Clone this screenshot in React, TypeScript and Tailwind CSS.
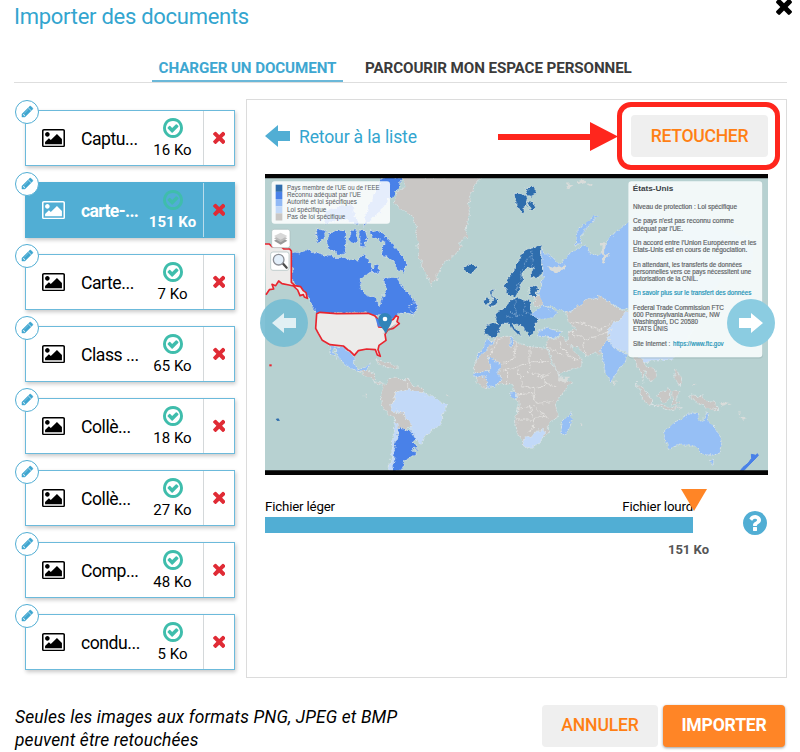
import React from "react";

const TIMES =
  "M1490 1322q0 40-28 68l-136 136q-28 28-68 28t-68-28l-294-294-294 294q-28 28-68 28t-68-28l-136-136q-28-28-28-68t28-68l294-294-294-294q-28-28-28-68t28-68l136-136q28-28 68-28t68 28l294 294 294-294q28-28 68-28t68 28l136 136q28 28 28 68t-28 68l-294 294 294 294q28 28 28 68z";
const CHECK =
  "M1299 813l-422 422q-19 19-45 19t-45-19l-294-294q-19-19-19-45t19-45l102-102q19-19 45-19t45 19l147 147 275-275q19-19 45-19t45 19l102 102q19 19 19 45t-19 45zm141 83q0-148-73-273t-198-198-273-73-273 73-198 198-73 273 73 273 198 198 273 73 273-73 198-198 73-273zm224 0q0 209-103 385.5t-279.5 279.5-385.5 103-385.5-103-279.5-279.5-103-385.5 103-385.5 279.5-279.5 385.5-103 385.5 103 279.5 279.5 103 385.5z";
const PICTURE =
  "M576 576q0 80-56 136t-136 56-136-56-56-136 56-136 136-56 136 56 56 136zm1024 384v448h-1408v-192l320-320 160 160 512-512zm96-704h-1600q-13 0-22.5 9.5t-9.5 22.5v1216q0 13 9.5 22.5t22.5 9.5h1600q13 0 22.5-9.5t9.5-22.5v-1216q0-13-9.5-22.5t-22.5-9.5zm160 32v1216q0 66-47 113t-113 47h-1600q-66 0-113-47t-47-113v-1216q0-66 47-113t113-47h1600q66 0 113 47t47 113z";
const PENCIL =
  "M491 1536l91-91-235-235-91 91v107h128v128h107zm523-928q0-22-22-22-10 0-17 7l-542 542q-7 7-7 17 0 22 22 22 10 0 17-7l542-542q7-7 7-17zm-54-192l416 416-832 832h-416v-416zm683 96q0 53-37 90l-166 166-416-416 166-165q36-38 90-38 53 0 91 38l235 234q37 39 37 91z";
const QUESTION =
  "M1024 1376v-192q0-14-9-23t-23-9h-192q-14 0-23 9t-9 23v192q0 14 9 23t23 9h192q14 0 23-9t9-23zm256-672q0-88-55.5-163t-138.5-116-170-41q-243 0-371 213-15 24 8 42l132 100q7 6 19 6 16 0 25-12 53-68 86-92 34-24 86-24 48 0 85.5 26t37.5 59q0 38-20 61t-68 45q-63 28-115.5 86.5t-52.5 125.5v36q0 14 9 23t23 9h192q14 0 23-9t9-23q0-19 21.5-49.5t54.5-49.5q32-18 49-28.5t46-35 44.5-48 28-60.5 12.5-81zm384 192q0 209-103 385.5t-279.5 279.5-385.5 103-385.5-103-279.5-279.5-103-385.5 103-385.5 279.5-279.5 385.5-103 385.5 103 279.5 279.5 103 385.5z";

function Icon({ d, box, className }: { d: string; box: string; className: string }) {
  return (
    <svg viewBox={box} className={className} fill="currentColor" aria-hidden="true">
      <path d={d} />
    </svg>
  );
}

const files = [
  { name: "Captu...", size: "16 Ko" },
  { name: "carte-...", size: "151 Ko", active: true },
  { name: "Carte...", size: "7 Ko" },
  { name: "Class ...", size: "65 Ko" },
  { name: "Collè...", size: "18 Ko" },
  { name: "Collè...", size: "27 Ko" },
  { name: "Comp...", size: "48 Ko" },
  { name: "condu...", size: "5 Ko" },
];

function FileCard({ name, size, active }: { name: string; size: string; active?: boolean }) {
  return (
    <li
      className={
        "relative flex h-14 w-[210px] border shadow-[1px_2px_4px_rgba(0,0,0,0.22)] " +
        (active ? "border-[#51aed4] bg-[#51aed4] font-bold text-white" : "border-[#6cbadb] bg-white text-black")
      }
    >
      <span className="absolute -left-[11px] -top-[11px] flex size-6 items-center justify-center rounded-full border border-[#51aed4] bg-white text-[#3fa6d0]">
        <Icon d={PENCIL} box="0 0 1792 1792" className="size-[13px] [&_path]:stroke-current [&_path]:[stroke-width:50]" />
      </span>
      <Icon d={PICTURE} box="-64 128 1920 1536" className="ml-4 mt-[18px] h-[18.4px] w-[23px]" />
      <span className="ml-4 w-[61px] whitespace-nowrap pt-[16px] text-[17.6px] leading-6">
        <span className={active ? "font-bold tracking-[-0.65px]" : "tracking-[-0.45px]"}>{name}</span>
      </span>
      <span className="flex w-[61px] flex-col items-center text-[15px] leading-[18px]">
        <Icon d={CHECK} box="128 128 1536 1536" className="mt-[7px] size-5 text-[#3fbdac]" />
        <span className="mt-[3px] whitespace-nowrap">{size}</span>
      </span>
      <span className={"flex flex-1 items-center justify-center border-l text-[#e02b35] " + (active ? "border-[#b9dceb]" : "border-[#d4d8da]")}>
        <Icon d={TIMES} box="302 302 1188 1252" className="mb-px h-[13px] w-[12.5px]" />
      </span>
    </li>
  );
}

const GRAY = "#c9c7c5";
const DARK = "#2f6dad";
const BLUE = "#4981e8";
const LIGHT = "#96bff5";
const PALE = "#c2d9f8";

const lands: [string, string][] = [
  [GRAY, "455,20 470,48 445,62 427,98 455,118 488,140 498,180 507,250 520,295 545,347 560,320 575,285 602,265 635,235 628,220 648,200 658,130 655,90 665,65 690,20"],
  [BLUE, "125,243 150,250 180,240 210,255 235,252 250,265 290,265 325,270 345,248 360,280 370,305 335,325 328,350 345,375 375,385 390,410 402,375 405,350 400,325 440,322 460,355 480,375 500,400 495,435 470,430 450,430 430,450 400,440 375,435 340,428 200,428 185,400 165,365 125,335"],
  [BLUE, "360,178 400,188 415,210 440,235 470,278 460,305 440,295 425,270 400,262 395,240 405,215 370,205"],
  [BLUE, "240,188 280,182 292,210 288,245 265,250 235,235 230,215"],
  [BLUE, "200,175 230,182 222,210 200,217"],
  [BLUE, "298,182 320,180 320,215 302,215"],
  [BLUE, "330,180 350,182 345,230 330,230"],
  [BLUE, "365,290 390,285 390,308 368,310"],
  [BLUE, "390,24 455,20 445,55 420,85 395,120 340,170 350,120 370,80"],
  [BLUE, "230,120 300,100 330,165 270,150 225,160"],
  [BLUE, "480,405 497,398 500,430 480,428"],
  [LIGHT, "235,525 280,531 300,543 313,558 310,580 325,597 343,590 360,580 350,600 330,605 290,590 265,560 258,535 250,535 262,570 245,550"],
  [GRAY, "330,605 350,598 375,610 372,635 400,640 385,645 360,625"],
  [GRAY, "375,572 420,578 445,595 425,595 395,585"],
  [GRAY, "388,690 400,645 430,622 470,630 520,655 520,680 480,720 490,765 465,778 440,775 435,745 405,725"],
  [PALE, "422,705 440,670 480,657 520,673 545,680 590,705 570,760 550,780 530,792 515,825 495,805 475,790 487,765 460,735 425,720"],
  [PALE, "433,745 445,775 440,840 430,904 415,904 425,860"],
  [BLUE, "447,775 475,778 498,803 487,822 507,830 500,840 490,835 493,855 465,870 455,900 430,904 433,840"],
  [DARK, "640,287 665,282 682,292 662,313 645,303"],
  [DARK, "792,70 820,70 832,80 830,105 815,132 800,110"],
  [DARK, "828,60 850,52 860,65 845,80 832,75"],
  [DARK, "835,98 845,92 850,118 838,120"],
  [DARK, "765,345 790,300 825,240 872,228 880,290 865,325 842,322 852,290 835,292 820,310 812,350 790,382 770,368"],
  [DARK, "722,360 732,357 728,375 742,395 738,408 720,408 725,385"],
  [DARK, "703,388 715,385 716,402 703,407"],
  [DARK, "735,432 757,420 775,395 795,388 842,388 846,430 862,435 857,475 838,502 832,485 810,465 790,460 800,480 815,498 798,495 778,462 755,463 735,500 707,498 706,463 745,462"],
  [DARK, "840,350 860,345 863,378 840,380"],
  [GRAY, "850,380 880,378 882,405 855,407"],
  [LIGHT, "875,240 900,260 930,283 952,255 1000,225 1030,258 1055,245 1080,200 1125,165 1160,130 1230,135 1350,145 1490,200 1550,245 1545,260 1450,300 1380,370 1270,430 1200,410 1125,420 1050,383 960,430 880,405 863,370 880,325"],
  [LIGHT, "845,435 875,405 920,425 910,443 865,450"],
  [LIGHT, "975,225 982,180 1040,135 1044,140 1000,180 990,225"],
  [GRAY, "950,430 980,410 1010,390 1050,380 1120,422 1140,430 1100,450 1080,480 1090,520 1060,550 1010,555 950,520 955,485 980,480 955,455"],
  [PALE, "1075,475 1125,430 1200,450 1280,440 1330,480 1300,535 1260,570 1180,575 1130,550 1080,525"],
  [LIGHT, "865,480 895,475 935,485 930,499 900,503 863,498"],
  [GRAY, "890,505 940,503 955,520 980,550 1000,570 985,590 925,615 910,580 893,535"],
  [GRAY, "670,600 680,560 720,510 755,500 785,498 800,515 840,530 890,535 905,580 930,620 965,635 945,665 915,700 925,740 895,760 895,785 870,815 830,835 820,830 800,780 795,740 805,700 798,675 780,640 745,645 700,650 680,640"],
  [LIGHT, "675,575 680,560 715,512 735,510 705,545"],
  [LIGHT, "715,560 755,585 745,605 755,630 735,653 708,650 705,620 672,620 673,605 720,605"],
  [LIGHT, "782,500 790,500 790,532 780,525"],
  [LIGHT, "782,665 800,667 800,688 782,683"],
  [PALE, "817,805 848,800 862,780 880,778 880,803 860,828 825,835"],
  [LIGHT, "930,785 934,755 960,728 966,750 948,796"],
  [LIGHT, "1050,545 1075,510 1095,535 1133,555 1125,578 1105,600 1095,615 1086,637 1072,620 1060,570"],
  [GRAY, "1150,560 1172,560 1192,590 1218,600 1220,622 1200,635 1182,600 1178,640 1163,590"],
  [GRAY, "1158,640 1182,655 1208,693 1203,706 1178,688"],
  [GRAY, "1220,680 1257,650 1262,680 1240,699"],
  [GRAY, "1205,703 1250,708 1300,713 1255,720"],
  [GRAY, "1266,668 1287,663 1277,690 1287,702 1268,702"],
  [GRAY, "1318,678 1355,680 1392,698 1408,722 1370,714 1338,697"],
  [GRAY, "1270,595 1280,600 1295,630 1290,645 1275,620"],
  [LIGHT, "1240,785 1280,752 1320,730 1345,735 1350,750 1360,750 1368,728 1380,760 1415,805 1405,845 1380,857 1355,845 1335,825 1290,825 1255,838"],
  [LIGHT, "1378,871 1395,871 1387,889"],
];

const borders =
  "M755 502L725 540L715 560M800 520L795 560L755 585M840 530V575L805 590L760 600M890 575H840L835 605L875 620L905 610M805 590L815 650L850 655L890 640L920 650M800 675L845 670L860 700L910 695M800 750H850L870 735L895 745M800 715L840 710L850 750V775M850 655L855 690M835 605L815 625M930 520L950 555L985 570M955 485L1000 505L1040 500M1040 500L1085 480M1000 505L1005 555M960 455L1000 460L1050 480L1090 455M440 665L425 700M470 640V657M442 720L460 735M895 535L915 540L940 560M770 600V640M875 620L890 640M850 775L830 790M850 710L890 740";

const notes: [number, string, number, boolean][] = [
  [118, "Niveau de protection : Loi spécifique", 312, false],
  [160, "Ce pays n'est pas reconnu comme", 303, false],
  [182, "adéquat par l'UE.", 150, false],
  [224, "Un accord entre l'Union Européenne et les", 370, false],
  [246, "Etats-Unis est en cours de négociation.", 343, false],
  [290, "En attendant, les transferts de données", 327, false],
  [312, "personnelles vers ce pays nécessitent une", 355, false],
  [333, "autorisation de la CNIL.", 195, false],
  [376, "En savoir plus sur le transfert des données", 355, true],
  [419, "Federal Trade Commission FTC", 273, false],
  [441, "600 Pennsylvania Avenue, NW", 260, false],
  [462, "Washington, DC 20580", 195, false],
  [483, "ETATS UNIS", 104, false],
  [527, "Site Internet :", 112, false],
];

const legend: [number, string, string, number][] = [
  [60, DARK, "Pays membre de l'UE ou de l'EEE", 278],
  [81, BLUE, "Reconnu adéquat par l'UE", 222],
  [103, "#91b9f5", "Autorité et loi spécifiques", 210],
  [125, PALE, "Loi spécifique", 118],
  [147, GRAY, "Pas de loi spécifique", 175],
];

function WorldMap() {
  return (
    <svg viewBox="45 12 1509 903" className="block h-[301px] w-[503px] font-['Liberation_Sans',sans-serif]" preserveAspectRatio="none">
      <defs>
        <filter id="coast" x="0" y="0" width="100%" height="100%" filterUnits="userSpaceOnUse">
          <feTurbulence type="fractalNoise" baseFrequency="0.05" numOctaves="3" seed="4" />
          <feDisplacementMap in="SourceGraphic" scale="20" xChannelSelector="R" yChannelSelector="G" />
        </filter>
      </defs>
      <rect x="45" y="12" width="1509" height="903" fill="#b7d1d1" />
      <g filter="url(#coast)">
        {lands.map(([color, points], i) => (
          <polygon key={i} points={points} fill={color} stroke="#dce6e8" strokeWidth="2.5" strokeDasharray="6 3" />
        ))}
        <path d={borders} fill="none" stroke="#e9e8e6" strokeWidth="2.5" strokeDasharray="7 2" />
        <path d="M780 420L800 440L825 435M795 392L800 440M765 445L785 440M825 390L820 425L846 430M800 360L820 290L845 250M845 290L842 240" fill="none" stroke="#8fb4d8" strokeWidth="2" strokeDasharray="6 3" />
        <g fill="#d9dcda">
          <path d="M945 48l12-8 10 6-12 7zM980 35l20-6 8 8-18 8zM1008 45l18-3-4 10zM1055 215l12 4-2 30 15 8-8 6-8 18-8-2 6-22-8-10zM895 285l25 10 25-12 8 6-30 20-22-5zM925 620l35 0-12 18-24-8zM1090 635l8 3-5 10zM1410 695l35 8-30 8zM1465 720l8 10-6 3zM1470 732l15 13-10 5zM1520 748l12-5-4 8z" />
          <circle cx="595" cy="678" r="3" /><circle cx="344" cy="677" r="3" /><circle cx="994" cy="765" r="3" /><circle cx="1333" cy="642" r="3" />
        </g>
      </g>
      <path d="M1504 853l14 3 4-5 3 5-10 11-12 12-22 23h-10l8-10 16-13 10-14z" fill={BLUE} stroke={BLUE} strokeWidth="3" />
      <g fill="#ecebea" stroke="#e8252f" strokeWidth="5" strokeLinejoin="round">
        <path d="M45 222L58 222L66 230L95 231L102 237L119 237L124 243V337L135 347L152 350L160 362L168 368L172 385L163 381L160 374L150 377L143 360L130 348L117 345L96 341L86 333L77 347L66 343L71 357L58 359L48 374" />
        <path d="M200 431L210 427L260 431L355 430L374 437L383 447L386 471L403 472L414 456L430 448L438 437L445 441L441 455L448 461L430 475L414 479L405 493L408 511L387 526L384 539L391 559L382 555L376 539L350 537L325 542L313 556L301 544L294 540L280 528L240 524L217 511L205 490L197 475Z" />
      </g>
      <path d="M376 443L390 450 400 468 384 470z" fill={BLUE} />
      <path d="M58 583h7v6h-7z" fill="#e8252f" />
      <path d="M77 747l8-2 5 7-8 1z" fill={DARK} />
      <path d="M397 492L425 470L442 458L421 480z" fill="#8b8583" opacity=".6" />
      <path d="M405 429C393 429 385 438 385 449C385 463 399 476 408 491C413 474 426 463 426 449C426 438 417 429 405 429Z" fill="#3184b9" />
      <circle cx="405" cy="447" r="7" fill="#fff" />

      <rect x="65" y="34" width="355" height="127" rx="9" fill="#fff" fillOpacity=".86" />
      {legend.map(([y, color, label, width], i) => (
        <g key={i}>
          <rect x="77" y={44 + i * 21.5} width="20" height="21.5" fill={color} />
          <text x="111" y={y} fontSize="19" textLength={width} lengthAdjust="spacingAndGlyphs" fill="#555a5e">{label}</text>
        </g>
      ))}
      <rect x="65" y="178" width="55" height="55" rx="7" fill="#fff" stroke="#a9bcbc" strokeWidth="2" />
      <path d="M72 212l20-11 20 11-20 12z" fill="#999" /><path d="M72 205l20-11 20 11-20 12z" fill="#bbb" /><path d="M72 198l20-10 20 10-20 11z" fill="#d7d7d7" />
      <rect x="62" y="246" width="55" height="55" rx="7" fill="#fff" stroke="#a9bcbc" strokeWidth="2" />
      <path d="M98 280l12 13" stroke="#4c4c4c" strokeWidth="7" strokeLinecap="round" />
      <circle cx="86" cy="269" r="16" fill="#e3effa" stroke="#8c8f96" strokeWidth="4" />

      <rect x="1135" y="36" width="404" height="530" rx="10" fill="#8ea7a7" opacity=".3" />
      <rect x="1135" y="34" width="402" height="528" rx="10" fill="#f6fbfb" fillOpacity=".95" />
      <text x="1148" y="64" fontSize="24" fontWeight="700" textLength="122" lengthAdjust="spacingAndGlyphs" fill="#3c4246">États-Unis</text>
      {notes.map(([y, text, width, link]) => (
        <text key={y} x="1149" y={y} fontSize="19" textLength={width} lengthAdjust="spacingAndGlyphs" fill={link ? "#1791b5" : "#5d6265"} stroke={link ? "#1791b5" : "#5d6265"} strokeWidth=".5">{text}</text>
      ))}
      <text x="1269" y="527" fontSize="19" textLength="152" lengthAdjust="spacingAndGlyphs" fill="#1791b5" stroke="#1791b5" strokeWidth=".5">https://www.ftc.gov</text>
      <path d="M45 12H1554V25H45zM45 901H1554V915H45z" fill="#050505" />
    </svg>
  );
}

function NavButton({ flip }: { flip?: boolean }) {
  return (
    <button
      className={
        "absolute top-[125px] flex size-12 items-center justify-center rounded-full text-white " +
        (flip ? "-right-[7px] bg-[#8bcce1]" : "-left-[5px] bg-[#76bdd3]/90")
      }
    >
      <svg viewBox="0 0 24 20" className={"h-5 w-6 " + (flip ? "rotate-180" : "text-[#e1f0f4]")} fill="currentColor">
        <path d="M0 10L12 0V5H24V15H12V20Z" />
      </svg>
    </button>
  );
}

export default function App() {
  return (
    <div className="flex h-[752px] w-[800px] flex-col overflow-hidden bg-white font-['Roboto',sans-serif] text-black">
      <header className="flex h-[54px] justify-between pl-[14px] pr-2">
        <h1 className="pt-[3px] text-[22px] leading-7 tracking-[-0.28px] text-[#33a5cf]">Importer des documents</h1>
        <Icon d={TIMES} box="302 302 1188 1252" className="-mt-[2px] h-[17px] w-4" />
      </header>
      <nav className="ml-[14px] flex h-[29px] w-[773px] border-b border-[#dedede] text-[15.2px] font-bold leading-7">
        <span className="ml-[138px] h-7 w-[191px] whitespace-nowrap border-b-2 border-[#6bb8d9] text-center tracking-[-0.1px] text-[#3ea7d1]">CHARGER UN DOCUMENT</span>
        <span className="ml-[22px] whitespace-nowrap tracking-[-0.1px] text-[#3b3b3b]">PARCOURIR MON ESPACE PERSONNEL</span>
      </nav>
      <main className="mt-4 flex h-[580px]">
        <ul className="flex w-[246px] flex-col gap-4 pl-[25px] pt-[11px]">
          {files.map((file, i) => (
            <FileCard key={i} {...file} />
          ))}
        </ul>
        <section className="flex w-[541px] flex-col border border-[#dcdcdc] pl-[18px]">
          <div className="flex h-[74px] items-center">
            <svg viewBox="0 0 26 22" className="mb-[2px] h-[22px] w-[26px] text-[#51aed4]" fill="currentColor">
              <path d="M0 11L13 0V6H25V16H13V22Z" />
            </svg>
            <a className="ml-2 w-[199px] whitespace-nowrap text-[17.6px] leading-6 tracking-[-0.17px] text-[#33a5cf]">Retour à la liste</a>
            <svg viewBox="0 0 120 30" className="h-[30px] w-[120px]">
              <path d="M0 12H92V0L120 14.500L92 29V18H0Z" fill="#ff261d" />
            </svg>
            <div className="-ml-px -mt-px flex h-[68px] w-[163px] shrink-0 items-center justify-center rounded-[14px] border-[5px] border-[#ff261d] pl-px">
              <button className="h-[42px] w-[137px] rounded-sm bg-[#efefef] pl-px text-[17.6px] font-medium tracking-[-0.3px] text-[#ff7f14]">RETOUCHER</button>
            </div>
          </div>
          <div className="relative w-[503px]">
            <WorldMap />
            <NavButton />
            <NavButton flip />
          </div>
          <div className="flex w-[503px] items-start">
            <div className="relative mt-[23px] w-[428px] text-[13.3px] leading-[18px] tracking-[-0.18px]">
              <div className="flex justify-between">
                <span>Fichier léger</span>
                <span>Fichier lourd</span>
              </div>
              <div className="mt-[1px] h-4 w-[428px] bg-[#51aed4]" />
              <div className="mt-[8px] w-[444px] text-right text-[13px] font-bold tracking-normal text-[#555]">151 Ko</div>
              <svg viewBox="0 0 26 22" className="absolute -right-[14px] -top-[9px] h-[22px] w-[26px]">
                <path d="M0 0H26L13 22Z" fill="#ff8526" />
              </svg>
            </div>
            <Icon d={QUESTION} box="128 128 1536 1536" className="ml-[50px] mt-[36px] size-6 shrink-0 text-[#51aed4]" />
          </div>
        </section>
      </main>
      <footer className="flex pl-[15px] pt-[27px]">
        <p className="w-[527px] pt-px text-[17.4px] italic leading-[23px] tracking-[0.13px]">
          Seules les images aux formats PNG, JPEG et BMP
          <br />
          peuvent être retouchées
        </p>
        <button className="h-[42px] w-[116px] rounded-sm bg-[#efefef] pb-[2px] text-[17.6px] font-medium tracking-[-0.2px] text-[#ff7f14]">ANNULER</button>
        <button className="ml-[5px] h-[42px] w-[122px] rounded-sm bg-[#ff8526] pb-[2px] text-[17.6px] font-bold tracking-[-0.2px] text-white shadow-[0_1px_3px_rgba(0,0,0,0.4)]">IMPORTER</button>
      </footer>
    </div>
  );
}
